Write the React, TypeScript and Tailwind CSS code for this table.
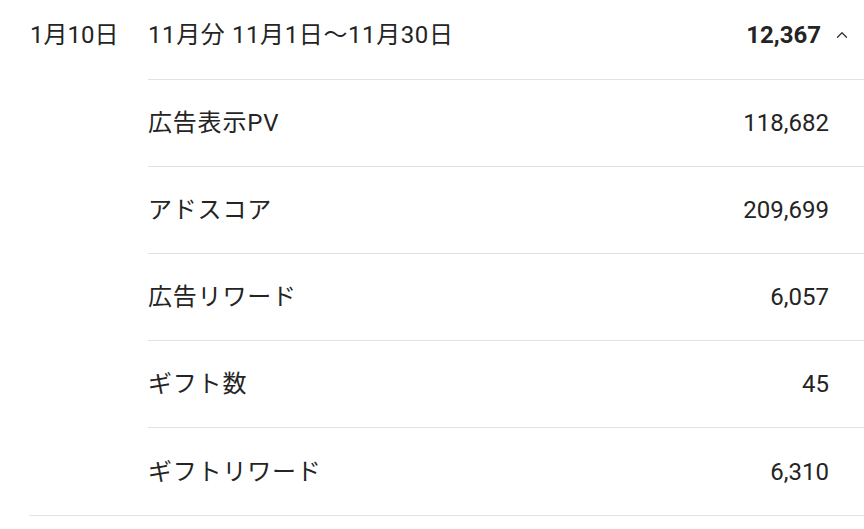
import { ChevronUp } from 'lucide-react';

interface Item {
  label: string;
  value: string;
}

const items: Item[] = [
  { label: '広告表示PV', value: '118,682' },
  { label: 'アドスコア', value: '209,699' },
  { label: '広告リワード', value: '6,057' },
  { label: 'ギフト数', value: '45' },
  { label: 'ギフトリワード', value: '6,310' },
];

export default function App() {
  return (
    <div
      className="min-h-screen w-[864px] bg-white text-[#242424] text-[24px]"
      style={{ fontFamily: 'Roboto, "Noto Sans CJK JP", sans-serif' }}
    >
      <div className="ml-[29px] flex border-b border-[#e2e2e2]">
        <div className="w-[119px] shrink-0 pl-px">
          <div className="h-[70px] flex items-center leading-none">1月10日</div>
        </div>
        <div className="flex-1">
          <div className="h-[80px] pb-[10px] flex items-center justify-between border-b border-[#e2e2e2] pr-[13px]">
            <span className="leading-none tracking-[0.6px]">11月分 11月1日〜11月30日</span>
            <div className="flex items-center gap-[12px]">
              <span className="font-bold leading-none">12,367</span>
              <ChevronUp className="w-[18px] h-[18px] text-[#333333]" strokeWidth={1.7} />
            </div>
          </div>
          {items.map((item, i) => (
            <div
              key={item.label}
              className={`h-[87px] flex items-center justify-between pr-[35px] ${
                i < items.length - 1 ? 'border-b border-[#e2e2e2]' : ''
              }`}
            >
              <span className="leading-none tracking-[0.8px]">{item.label}</span>
              <span className="leading-none">{item.value}</span>
            </div>
          ))}
        </div>
      </div>
    </div>
  );
}
